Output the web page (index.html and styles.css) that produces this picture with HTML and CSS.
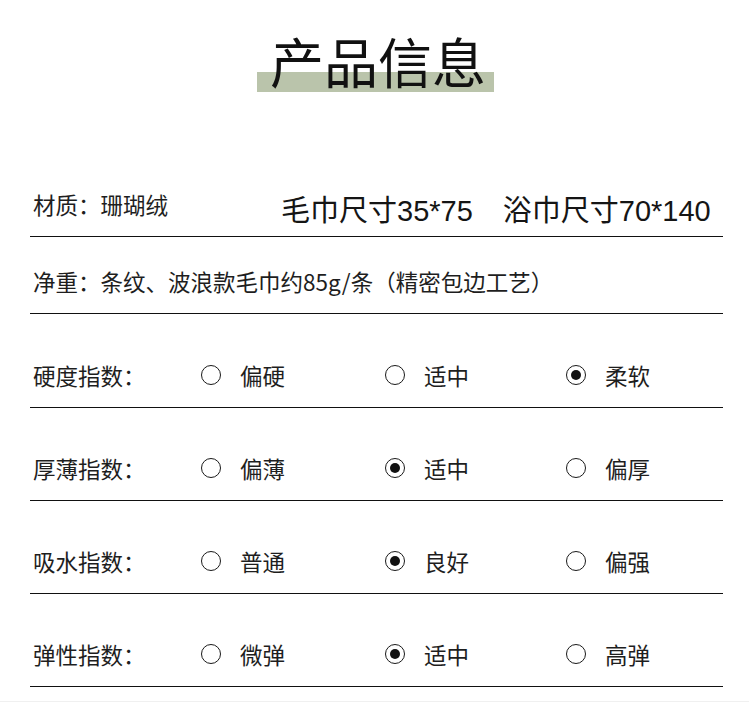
FILE: index.html
```html
<!DOCTYPE html>
<html lang="zh-CN">
<head>
<meta charset="utf-8">
<title>产品信息</title>
<link rel="stylesheet" href="styles.css">
</head>
<body>
<header class="header">
  <h1 class="title">产品信息</h1>
</header>
<main class="table">
  <div class="row row-first">
    <span class="label label-wide">材质：珊瑚绒</span>
    <span class="size">毛巾尺寸35*75</span>
    <span class="size size-second">浴巾尺寸70*140</span>
  </div>
  <div class="row row-second">
    <span class="label">净重：条纹、波浪款毛巾约85g/条（精密包边工艺）</span>
  </div>
  <div class="row row-radio row-third">
    <span class="label">硬度指数：</span>
    <span class="opt"><i class="radio"></i><span>偏硬</span></span>
    <span class="opt"><i class="radio"></i><span>适中</span></span>
    <span class="opt"><i class="radio on"></i><span>柔软</span></span>
  </div>
  <div class="row row-radio">
    <span class="label">厚薄指数：</span>
    <span class="opt"><i class="radio"></i><span>偏薄</span></span>
    <span class="opt"><i class="radio on"></i><span>适中</span></span>
    <span class="opt"><i class="radio"></i><span>偏厚</span></span>
  </div>
  <div class="row row-radio">
    <span class="label">吸水指数：</span>
    <span class="opt"><i class="radio"></i><span>普通</span></span>
    <span class="opt"><i class="radio on"></i><span>良好</span></span>
    <span class="opt"><i class="radio"></i><span>偏强</span></span>
  </div>
  <div class="row row-radio">
    <span class="label">弹性指数：</span>
    <span class="opt"><i class="radio"></i><span>微弹</span></span>
    <span class="opt"><i class="radio on"></i><span>适中</span></span>
    <span class="opt"><i class="radio"></i><span>高弹</span></span>
  </div>
</main>
<div class="divider"></div>
</body>
</html>
```

FILE: styles.css
```css
* { box-sizing: border-box; }

html, body {
  margin: 0;
  padding: 0;
  background: #ffffff;
}

body {
  font-family: "Noto Sans CJK SC", "Noto Sans", sans-serif;
  color: #1e1e1e;
  font-size: 22.5px;
  line-height: 30px;
}

.header {
  padding-top: 34px;
  margin-bottom: 82px;
  text-align: center;
}

.title {
  position: relative;
  z-index: 0;
  display: inline-block;
  margin: 0;
  padding-left: 7px;
  font-size: 54px;
  line-height: 54px;
  font-weight: 400;
  color: #111111;
}

.title::before {
  content: "";
  position: absolute;
  z-index: -1;
  left: -6px;
  top: 38px;
  width: 237px;
  height: 20px;
  background: #bac4ab;
}

.table {
  margin-left: 30px;
  width: 693px;
}

.row {
  display: flex;
  align-items: flex-end;
  padding-left: 3px;
  padding-bottom: 17px;
  border-bottom: 1px solid #111111;
}

.row-first { height: 66px; }
.row-second { height: 77px; }
.row-radio { height: 93px; }
.row-third { height: 94px; }

.label {
  flex: none;
  white-space: nowrap;
}

.label-wide { width: 248px; }

.size {
  flex: none;
  font-family: "Liberation Sans", "Noto Sans CJK SC", sans-serif;
  font-size: 29px;
  line-height: 36px;
  margin-bottom: -10px;
  white-space: nowrap;
  color: #151515;
}

.size-second { margin-left: 30px; }

.row-radio .label { width: 168px; }

.opt {
  flex: none;
  display: flex;
  align-items: center;
  gap: 19px;
  width: 184px;
}

.opt:nth-child(3) { width: 181px; }

.radio {
  flex: none;
  position: relative;
  display: block;
  width: 20px;
  height: 20px;
  border: 1.8px solid #1a1a1a;
  border-radius: 50%;
}

.radio.on::after {
  content: "";
  position: absolute;
  left: 50%;
  top: 50%;
  width: 10px;
  height: 10px;
  margin: -5px 0 0 -5px;
  border-radius: 50%;
  background: #111111;
}

.divider {
  margin-top: 14px;
  border-top: 1px solid #f0f0f0;
}
```
